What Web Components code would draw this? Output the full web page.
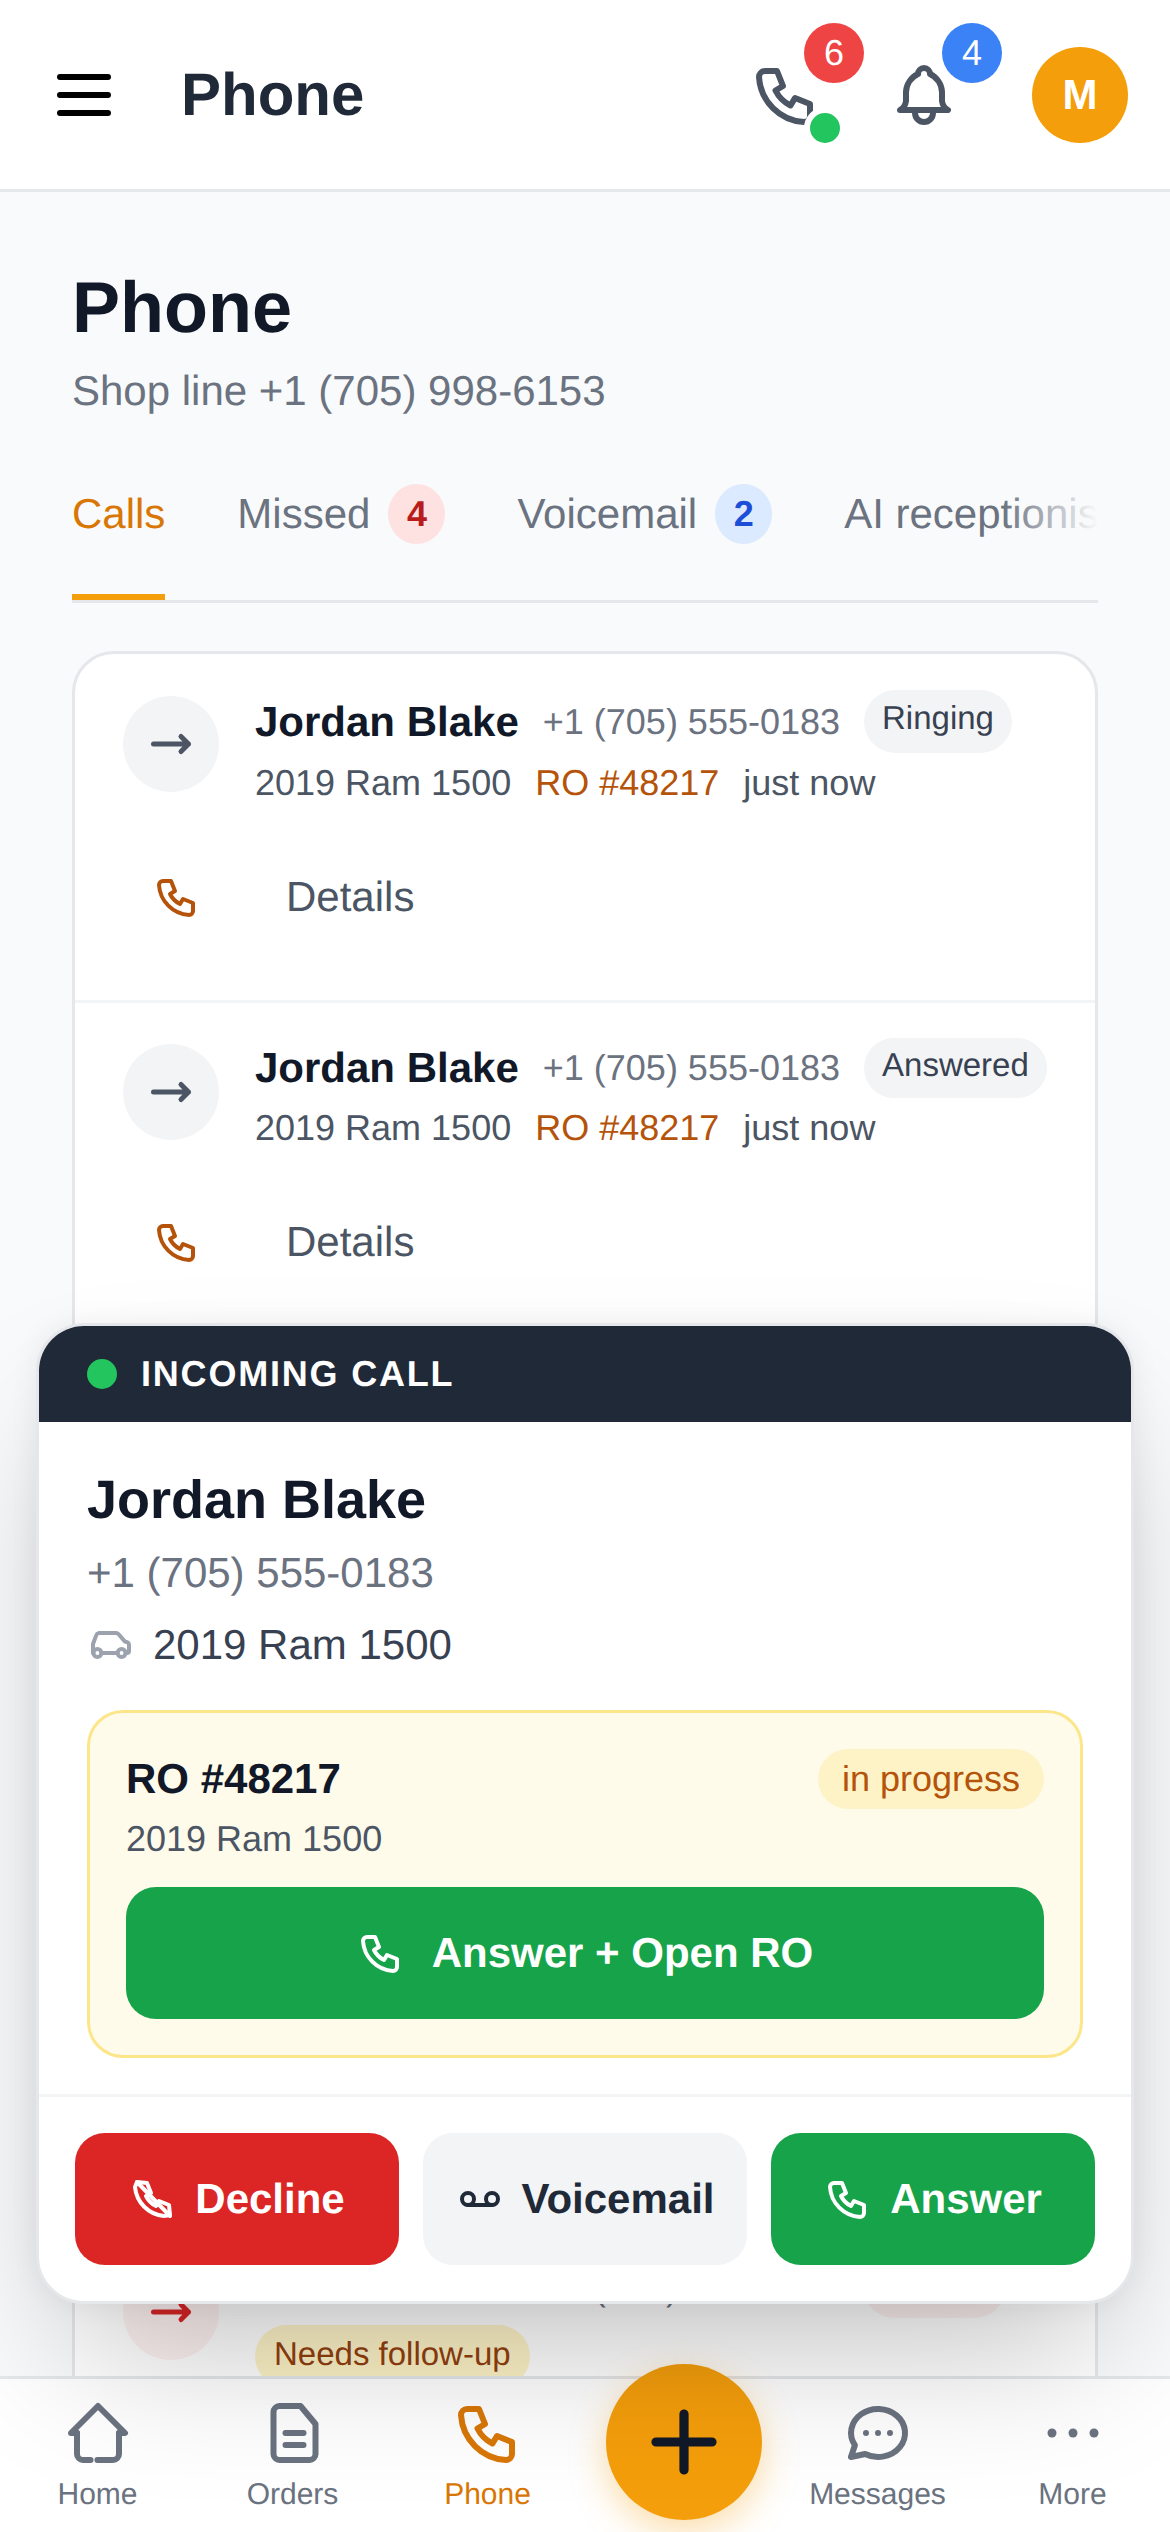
<!DOCTYPE html>
<html lang="en">
<head>
<meta charset="utf-8">
<title>Phone</title>
<style>
    html, body { margin: 0; padding: 0; background: #f9fafb; }
    body { font-family: "Liberation Sans", Arial, sans-serif; color: #111827; text-rendering: geometricPrecision; }
    .ro { color: #b45309; }
    .flag {
        display: inline-block;
        margin-top: -2px;
        height: 63px;
        line-height: 57px;
        padding: 0 19px;
        border-radius: 32px;
        background: #fef3c7;
        color: #92400e;
        font-size: 33px;
    }
</style>
</head>
<body>
<phone-page>
    <top-bar title="Phone"></top-bar>
    <phone-main>
        <tab-strip>
            <tab-item active>Calls</tab-item>
            <tab-item count="4" tone="red">Missed</tab-item>
            <tab-item count="2" tone="blue">Voicemail</tab-item>
            <tab-item>AI receptionist</tab-item>
        </tab-strip>
        <call-list>
            <call-row name="Jordan Blake" phone="+1 (705) 555-0183" status="Ringing" actions>
                <span>2019 Ram 1500</span><span class="ro">RO #48217</span><span>just now</span>
            </call-row>
            <call-row name="Jordan Blake" phone="+1 (705) 555-0183" status="Answered" actions compact divider>
                <span>2019 Ram 1500</span><span class="ro">RO #48217</span><span>just now</span>
            </call-row>
            <call-row name="Jordan Blake" phone="+1 (705) 555-0183" status="Missed" tone="missed" compact divider offset="875">
                <span class="flag">Needs follow-up</span>
            </call-row>
        </call-list>
    </phone-main>
    <bottom-nav>
        <nav-item icon="home">Home</nav-item>
        <nav-item icon="file">Orders</nav-item>
        <nav-item icon="phone" active>Phone</nav-item>
        <fab-button></fab-button>
        <nav-item icon="message">Messages</nav-item>
        <nav-item icon="dots">More</nav-item>
    </bottom-nav>
    <incoming-call name="Jordan Blake" phone="+1 (705) 555-0183" vehicle="2019 Ram 1500" ro="RO #48217" ro-status="in progress"></incoming-call>
</phone-page>

<script>
const ICONS = {
    menu: '<path d="M4 6h16M4 12h16M4 18h16"/>',
    phone: '<path d="M5 4h4l2 5l-2.5 1.5a11 11 0 0 0 5 5l1.5 -2.5l5 2v4a2 2 0 0 1 -2 2a16 16 0 0 1 -15 -15a2 2 0 0 1 2 -2"/>',
    decline: '<path d="M4 3.5l5 .5l2 5l-2.5 1.5a11 11 0 0 0 5 5l1.5 -2.5l5 2l.5 5l-3 .5a16 16 0 0 1 -14.5 -14.5z"/><path d="M4 3.5l16.500 17"/>',
    bell: '<path d="M10 5a2 2 0 1 1 4 0a7 7 0 0 1 4 6v3a4 4 0 0 0 2 3h-16a4 4 0 0 0 2 -3v-3a7 7 0 0 1 4 -6"/><path d="M9 17v1a3 3 0 0 0 6 0v-1"/>',
    arrow: '<path d="M5 12h14M16 9l3 3l-3 3"/>',
    car: '<circle cx="5.2" cy="16" r="2"/><circle cx="17.3" cy="16" r="2"/><path d="M3.200 16h-.2v-4.500l1.600 -4.300a1.800 1.800 0 0 1 1.400 -1.200h8.600a1.500 1.500 0 0 1 1.100 .5l3.300 3.800l1 .3a1.500 1.500 0 0 1 1 1.400v3a1 1 0 0 1 -1 1h-.7"/><path d="M15.300 16h-8.100"/>',
    voicemail: '<circle cx="6" cy="12" r="3"/><circle cx="18" cy="12" r="3"/><path d="M6 15h12"/>',
    home: '<path d="M5 12h-2l9 -9l9 9h-2"/><path d="M5 12v7a2 2 0 0 0 2 2h2.5"/><path d="M11.8 21h5.2a2 2 0 0 0 2 -2v-7"/>',
    file: '<path d="M14.5 3l5 6v10a2 2 0 0 1 -2 2h-10a2 2 0 0 1 -2 -2v-14a2 2 0 0 1 2 -2z"/><path d="M9.5 12h6M9.5 16h6"/>',
    message: '<path d="M3 20l1.3 -3.9c-2.324 -3.437 -1.426 -7.872 2.1 -10.374c3.526 -2.501 8.59 -2.296 11.845 .48c3.255 2.777 3.695 7.266 1.029 10.501c-2.666 3.235 -7.615 4.215 -11.574 2.293l-4.7 1"/><path d="M12 12v.01M8 12v.01M16 12v.01"/>',
    dots: '<circle cx="5" cy="12" r="1.5" fill="currentColor" stroke="none"/><circle cx="12" cy="12" r="1.5" fill="currentColor" stroke="none"/><circle cx="19" cy="12" r="1.5" fill="currentColor" stroke="none"/>',
    plus: '<path d="M12 5v14M5 12h14"/>',
};

class AppIcon extends HTMLElement {
    connectedCallback() {
        const size = this.getAttribute("size") || 48;
        const stroke = this.getAttribute("stroke") || 2;
        const body = ICONS[this.getAttribute("name")] || "";
        this.attachShadow({ mode: "open" }).innerHTML = `
            <style>
                :host { display: block; flex: none; width: ${size}px; height: ${size}px; }
                svg { display: block; width: 100%; height: 100%; }
            </style>
            <svg viewBox="0 0 24 24" fill="none" stroke="currentColor" stroke-width="${stroke}"
                stroke-linecap="round" stroke-linejoin="round">${body}</svg>
        `;
    }
}

class PhonePage extends HTMLElement {
    constructor() {
        super();
        this.attachShadow({ mode: "open" }).innerHTML = `
            <style>
                :host {
                    display: flex;
                    flex-direction: column;
                    position: relative;
                    width: 1170px;
                    height: 2532px;
                    overflow: hidden;
                    background: #f9fafb;
                }
            </style>
            <slot></slot>
        `;
    }
}

class TopBar extends HTMLElement {
    connectedCallback() {
        this.attachShadow({ mode: "open" }).innerHTML = `
            <style>
                :host {
                    display: flex;
                    align-items: center;
                    flex: none;
                    box-sizing: border-box;
                    height: 192px;
                    padding: 0 42px 0 48px;
                    background: #fff;
                    border-bottom: 3px solid #e5e7eb;
                }
                .menu { color: #000; }
                h1 { margin: 0 0 0 61px; flex: 1; font-size: 60px; line-height: 72px; font-weight: 700; color: #1f2937; }
                .bell { margin-left: 66px; }
                .btn { position: relative; color: #4b5563; }
                .badge {
                    position: absolute;
                    left: 54px;
                    top: -36px;
                    width: 60px;
                    height: 60px;
                    border-radius: 50%;
                    color: #fff;
                    font-size: 36px;
                    line-height: 60px;
                    text-align: center;
                }
                .red { background: #ef4444; }
                .blue { background: #3b82f6; }
                .live {
                    position: absolute;
                    left: 54px;
                    top: 48px;
                    width: 30px;
                    height: 30px;
                    border: 6px solid #fff;
                    border-radius: 50%;
                    background: #22c55e;
                }
                .avatar {
                    margin-left: 72px;
                    width: 96px;
                    height: 96px;
                    border-radius: 50%;
                    background: #f59e0b;
                    color: #fff;
                    font-size: 42px;
                    font-weight: 700;
                    line-height: 96px;
                    text-align: center;
                }
            </style>
            <app-icon class="menu" name="menu" size="72"></app-icon>
            <h1>${this.getAttribute("title")}</h1>
            <div class="btn">
                <app-icon name="phone" size="72"></app-icon>
                <span class="badge red">6</span>
                <span class="live"></span>
            </div>
            <div class="btn bell">
                <app-icon name="bell" size="72"></app-icon>
                <span class="badge blue">4</span>
            </div>
            <div class="avatar">M</div>
        `;
    }
}

class PhoneMain extends HTMLElement {
    constructor() {
        super();
        this.attachShadow({ mode: "open" }).innerHTML = `
            <style>
                :host {
                    display: block;
                    flex: 1;
                    min-height: 0;
                    overflow: hidden;
                    padding: 77px 72px 0;
                }
                h2 { margin: 0; font-size: 72px; line-height: 78px; font-weight: 700; color: #111827; }
                p { margin: 20px 0 69px; font-size: 42px; line-height: 48px; color: #6b7280; }
            </style>
            <h2>Phone</h2>
            <p>Shop line +1 (705) 998-6153</p>
            <slot></slot>
        `;
    }
}

class TabStrip extends HTMLElement {
    constructor() {
        super();
        this.attachShadow({ mode: "open" }).innerHTML = `
            <style>
                :host {
                    display: flex;
                    gap: 72px;
                    position: relative;
                    overflow: hidden;
                    border-bottom: 3px solid #e5e7eb;
                }
                .fade {
                    position: absolute;
                    right: 0;
                    top: 0;
                    bottom: 0;
                    width: 96px;
                    background: linear-gradient(to right, rgba(249, 250, 251, 0), #f9fafb);
                }
            </style>
            <slot></slot>
            <div class="fade"></div>
        `;
    }
}

class TabItem extends HTMLElement {
    connectedCallback() {
        const count = this.getAttribute("count");
        const active = this.hasAttribute("active");
        const tones = {
            red: "background:#fee2e2;color:#b91c1c",
            blue: "background:#dbeafe;color:#1d4ed8",
        };
        this.attachShadow({ mode: "open" }).innerHTML = `
            <style>
                :host {
                    display: flex;
                    flex: none;
                    align-items: center;
                    gap: 18px;
                    height: 60px;
                    padding-bottom: 50px;
                    border-bottom: 6px solid ${active ? "#f59e0b" : "transparent"};
                    font-size: 42px;
                    color: ${active ? "#d97706" : "#6b7280"};
                    white-space: nowrap;
                }
                .count {
                    width: 57px;
                    height: 60px;
                    border-radius: 50%;
                    font-size: 36px;
                    font-weight: 700;
                    line-height: 60px;
                    text-align: center;
                }
            </style>
            <slot></slot>
            ${count ? `<span class="count" style="${tones[this.getAttribute("tone")]}">${count}</span>` : ""}
        `;
    }
}

class CallList extends HTMLElement {
    constructor() {
        super();
        this.attachShadow({ mode: "open" }).innerHTML = `
            <style>
                :host {
                    display: block;
                    margin-top: 48px;
                    background: #fff;
                    border: 3px solid #e5e7eb;
                    border-radius: 42px;
                    overflow: hidden;
                }
            </style>
            <slot></slot>
        `;
    }
}

class CallRow extends HTMLElement {
    connectedCallback() {
        const missed = this.getAttribute("tone") === "missed";
        const compact = this.hasAttribute("compact");
        const offset = this.getAttribute("offset") || 0;
        const actions = this.hasAttribute("actions") ? `
            <div class="actions">
                <div class="call"><app-icon name="phone"></app-icon></div>
                <div class="details">Details</div>
            </div>
        ` : "";
        this.attachShadow({ mode: "open" }).innerHTML = `
            <style>
                :host {
                    display: block;
                    margin-top: ${offset}px;
                    padding: ${compact ? 35 : 36}px 0 55px;
                    border-top: ${this.hasAttribute("divider") ? "3px solid #f3f4f6" : "0"};
                }
                .top { display: flex; padding-left: 48px; }
                .dir {
                    flex: none;
                    display: flex;
                    align-items: center;
                    justify-content: center;
                    width: 96px;
                    height: 96px;
                    margin: 6px 36px 0 0;
                    border-radius: 50%;
                    background: ${missed ? "#fef2f2" : "#f3f4f6"};
                    color: ${missed ? "#dc2626" : "#4b5563"};
                }
                .head { display: flex; align-items: center; gap: 24px; height: ${compact ? 60 : 63}px; white-space: nowrap; }
                .name { font-size: 42px; font-weight: 700; color: #111827; }
                .phone { font-size: 36px; color: #6b7280; }
                .status {
                    height: 100%;
                    padding: 0 18px;
                    border-radius: 32px;
                    background: ${missed ? "#fef2f2" : "#f3f4f6"};
                    color: ${missed ? "#b91c1c" : "#374151"};
                    font-size: 33px;
                    line-height: ${compact ? 54 : 56}px;
                }
                .meta {
                    display: flex;
                    align-items: flex-start;
                    gap: 24px;
                    margin-top: 9px;
                    font-size: 36px;
                    line-height: 42px;
                    color: #4b5563;
                    white-space: nowrap;
                }
                .actions { display: flex; align-items: center; gap: 25px; height: 96px; margin-top: 45px; padding-left: 48px; }
                .call { display: flex; justify-content: center; width: 108px; color: #b45309; }
                .details { padding: 0 30px; font-size: 42px; color: #4b5563; }
            </style>
            <div class="top">
                <div class="dir"><app-icon name="arrow" size="60"></app-icon></div>
                <div>
                    <div class="head">
                        <span class="name">${this.getAttribute("name")}</span>
                        <span class="phone">${this.getAttribute("phone")}</span>
                        <span class="status">${this.getAttribute("status")}</span>
                    </div>
                    <div class="meta"><slot></slot></div>
                </div>
            </div>
            ${actions}
        `;
    }
}

class NavItem extends HTMLElement {
    connectedCallback() {
        this.attachShadow({ mode: "open" }).innerHTML = `
            <style>
                :host {
                    display: flex;
                    flex-direction: column;
                    align-items: center;
                    gap: 8px;
                    padding-top: 18px;
                    font-size: 30px;
                    line-height: 36px;
                    color: ${this.hasAttribute("active") ? "#d97706" : "#6b7280"};
                }
            </style>
            <app-icon name="${this.getAttribute("icon")}" size="72"></app-icon>
            <slot></slot>
        `;
    }
}

class FabButton extends HTMLElement {
    constructor() {
        super();
        this.attachShadow({ mode: "open" }).innerHTML = `
            <style>
                :host { display: flex; justify-content: center; height: 0; }
                .fab {
                    flex: none;
                    display: flex;
                    align-items: center;
                    justify-content: center;
                    width: 156px;
                    height: 156px;
                    margin: -15px 0 0 2px;
                    border-radius: 50%;
                    background: #f59e0b;
                    color: #111827;
                    box-shadow: 0 12px 36px rgba(245, 158, 11, 0.35);
                }
            </style>
            <div class="fab"><app-icon name="plus" size="96" stroke="2.3"></app-icon></div>
        `;
    }
}

class BottomNav extends HTMLElement {
    constructor() {
        super();
        this.attachShadow({ mode: "open" }).innerHTML = `
            <style>
                :host {
                    display: grid;
                    grid-template-columns: repeat(6, 1fr);
                    flex: none;
                    box-sizing: border-box;
                    height: 156px;
                    background: #fff;
                    border-top: 3px solid #e5e7eb;
                    position: relative;
                }
            </style>
            <slot></slot>
        `;
    }
}

class ActionBtn extends HTMLElement {
    connectedCallback() {
        const tone = this.getAttribute("tone");
        const colors = {
            green: "background:#16a34a;color:#fff",
            red: "background:#dc2626;color:#fff",
            gray: "background:#f3f4f6;color:#1f2937",
        };
        this.attachShadow({ mode: "open" }).innerHTML = `
            <style>
                :host {
                    display: flex;
                    align-items: center;
                    justify-content: center;
                    gap: ${this.getAttribute("gap") || 18}px;
                    flex: 1;
                    height: 132px;
                    border-radius: 30px;
                    font-size: 42px;
                    font-weight: 700;
                    ${colors[tone]};
                }
            </style>
            <app-icon name="${this.getAttribute("icon")}"></app-icon>
            <slot></slot>
        `;
    }
}

class IncomingCall extends HTMLElement {
    connectedCallback() {
        this.attachShadow({ mode: "open" }).innerHTML = `
            <style>
                :host {
                    display: block;
                    position: absolute;
                    left: 36px;
                    right: 36px;
                    bottom: 228px;
                    background: #fff;
                    border: 3px solid #e5e7eb;
                    border-radius: 48px;
                    box-shadow: 0 75px 150px -36px rgba(0, 0, 0, 0.25), 0 0 30px rgba(0, 0, 0, 0.06);
                }
                .bar {
                    display: flex;
                    align-items: center;
                    gap: 24px;
                    height: 96px;
                    padding-left: 48px;
                    border-radius: 45px 45px 0 0;
                    background: #1f2937;
                    color: #fff;
                    font-size: 36px;
                    font-weight: 700;
                    letter-spacing: 1.8px;
                }
                .dot { width: 30px; height: 30px; border-radius: 50%; background: #22c55e; }
                .body { padding: 48px 48px 36px; }
                .name { font-size: 54px; font-weight: 700; line-height: 60px; color: #111827; }
                .phone { margin-top: 19px; font-size: 42px; line-height: 48px; color: #6b7280; }
                .vehicle { display: flex; align-items: center; gap: 18px; margin-top: 24px; font-size: 42px; line-height: 48px; color: #374151; }
                .vehicle app-icon { color: #9ca3af; }
                .ro {
                    margin-top: 41px;
                    padding: 36px;
                    background: #fffbeb;
                    border: 3px solid #fde68a;
                    border-radius: 36px;
                }
                .ro-top { display: flex; align-items: center; justify-content: space-between; }
                .ro-id { font-size: 42px; font-weight: 700; color: #111827; }
                .pill {
                    height: 60px;
                    padding: 0 24px;
                    border-radius: 30px;
                    background: #fef3c7;
                    color: #b45309;
                    font-size: 36px;
                    line-height: 60px;
                }
                .ro-sub { margin: 9px 0 27px; font-size: 36px; line-height: 42px; color: #4b5563; }
                .foot { display: flex; gap: 24px; padding: 36px; border-top: 3px solid #f3f4f6; }
            </style>
            <div class="bar"><span class="dot"></span>INCOMING CALL</div>
            <div class="body">
                <div class="name">${this.getAttribute("name")}</div>
                <div class="phone">${this.getAttribute("phone")}</div>
                <div class="vehicle"><app-icon name="car"></app-icon>${this.getAttribute("vehicle")}</div>
                <div class="ro">
                    <div class="ro-top">
                        <span class="ro-id">${this.getAttribute("ro")}</span>
                        <span class="pill">${this.getAttribute("ro-status")}</span>
                    </div>
                    <div class="ro-sub">${this.getAttribute("vehicle")}</div>
                    <action-btn tone="green" icon="phone" gap="27">Answer + Open RO</action-btn>
                </div>
            </div>
            <div class="foot">
                <action-btn tone="red" icon="decline">Decline</action-btn>
                <action-btn tone="gray" icon="voicemail">Voicemail</action-btn>
                <action-btn tone="green" icon="phone">Answer</action-btn>
            </div>
        `;
    }
}

customElements.define("app-icon", AppIcon);
customElements.define("phone-page", PhonePage);
customElements.define("top-bar", TopBar);
customElements.define("phone-main", PhoneMain);
customElements.define("tab-strip", TabStrip);
customElements.define("tab-item", TabItem);
customElements.define("call-list", CallList);
customElements.define("call-row", CallRow);
customElements.define("nav-item", NavItem);
customElements.define("fab-button", FabButton);
customElements.define("bottom-nav", BottomNav);
customElements.define("action-btn", ActionBtn);
customElements.define("incoming-call", IncomingCall);
</script>
</body>
</html>
